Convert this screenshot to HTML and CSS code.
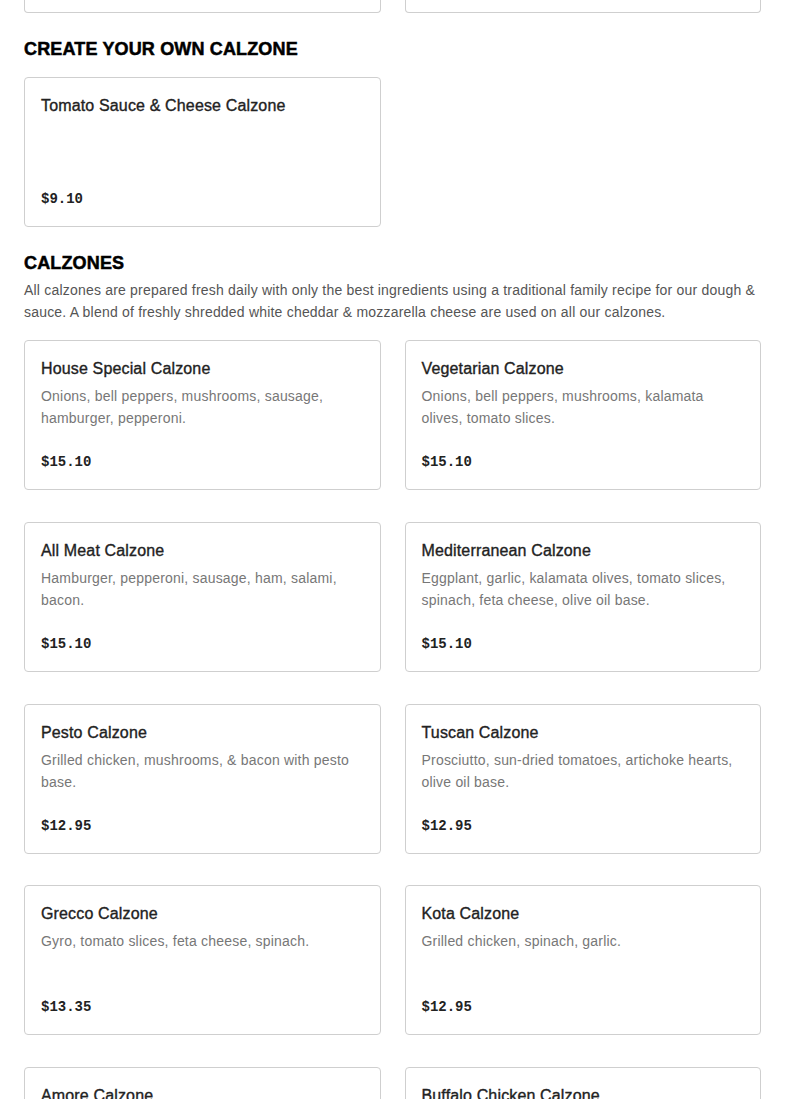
FILE: index.html
```html
<!DOCTYPE html>
<html lang="en">
<head>
<meta charset="utf-8">
<title>Calzones</title>
<link rel="stylesheet" href="styles.css">
</head>
<body>
<main class="menu">
  <div class="grid">
    <div class="stub"></div>
    <div class="stub"></div>
  </div>

  <section class="section">
    <h2 class="section-title">CREATE YOUR OWN CALZONE</h2>
    <div class="grid">
      <article class="card">
        <h3 class="card-title">Tomato Sauce &amp; Cheese Calzone</h3>
        <p class="card-price">$9.10</p>
      </article>
    </div>
  </section>

  <section class="section">
    <h2 class="section-title">CALZONES</h2>
    <p class="section-desc">All calzones are prepared fresh daily with only the best ingredients using a traditional family recipe for our dough &amp; sauce. A blend of freshly shredded white cheddar &amp; mozzarella cheese are used on all our calzones.</p>
    <div class="grid">
      <article class="card">
        <h3 class="card-title">House Special Calzone</h3>
        <p class="card-desc">Onions, bell peppers, mushrooms, sausage, hamburger, pepperoni.</p>
        <p class="card-price">$15.10</p>
      </article>
      <article class="card">
        <h3 class="card-title">Vegetarian Calzone</h3>
        <p class="card-desc">Onions, bell peppers, mushrooms, kalamata olives, tomato slices.</p>
        <p class="card-price">$15.10</p>
      </article>
      <article class="card">
        <h3 class="card-title">All Meat Calzone</h3>
        <p class="card-desc">Hamburger, pepperoni, sausage, ham, salami, bacon.</p>
        <p class="card-price">$15.10</p>
      </article>
      <article class="card">
        <h3 class="card-title">Mediterranean Calzone</h3>
        <p class="card-desc">Eggplant, garlic, kalamata olives, tomato slices, spinach, feta cheese, olive oil base.</p>
        <p class="card-price">$15.10</p>
      </article>
      <article class="card">
        <h3 class="card-title">Pesto Calzone</h3>
        <p class="card-desc">Grilled chicken, mushrooms, &amp; bacon with pesto base.</p>
        <p class="card-price">$12.95</p>
      </article>
      <article class="card">
        <h3 class="card-title">Tuscan Calzone</h3>
        <p class="card-desc">Prosciutto, sun-dried tomatoes, artichoke hearts, olive oil base.</p>
        <p class="card-price">$12.95</p>
      </article>
      <article class="card">
        <h3 class="card-title">Grecco Calzone</h3>
        <p class="card-desc">Gyro, tomato slices, feta cheese, spinach.</p>
        <p class="card-price">$13.35</p>
      </article>
      <article class="card">
        <h3 class="card-title">Kota Calzone</h3>
        <p class="card-desc">Grilled chicken, spinach, garlic.</p>
        <p class="card-price">$12.95</p>
      </article>
      <article class="card">
        <h3 class="card-title">Amore Calzone</h3>
        <p class="card-desc">Chicken, spinach, artichoke hearts, sun-dried tomatoes.</p>
        <p class="card-price">$13.35</p>
      </article>
      <article class="card">
        <h3 class="card-title">Buffalo Chicken Calzone</h3>
        <p class="card-desc">Buffalo chicken, onions, bacon.</p>
        <p class="card-price">$13.35</p>
      </article>
    </div>
  </section>
</main>
</body>
</html>
```

FILE: styles.css
```css
* { box-sizing: border-box; }

html, body {
  margin: 0;
  padding: 0;
  background: #ffffff;
}

body {
  font-family: "Liberation Sans", Arial, sans-serif;
  color: #2b2b2b;
}

.menu {
  padding: 0 24px 40px;
}

.grid {
  display: grid;
  grid-template-columns: 1fr 1fr;
  column-gap: 24px;
  row-gap: 31.75px;
}

.stub {
  height: 13px;
  border: 1px solid #cfcfcf;
  border-top: none;
  border-radius: 0 0 4px 4px;
}

.section {
  padding-top: 23px;
}

.section-title {
  margin: 0 0 15px;
  font-family: "Liberation Sans", Arial, sans-serif;
  font-weight: 900;
  font-size: 18px;
  line-height: 26px;
  color: #000;
  letter-spacing: 0.15px;
  -webkit-text-stroke: 0.5px #000;
}

.section-desc {
  margin: -12px 0 17px;
  font-size: 14px;
  line-height: 22px;
  letter-spacing: 0.2px;
  color: #555555;
}

.card {
  display: flex;
  flex-direction: column;
  height: 150px;
  padding: 16px 16px 15px;
  border: 1px solid #cfcfcf;
  border-radius: 4px;
}

.card-title {
  margin: 0;
  font-size: 16px;
  line-height: 24px;
  font-weight: 400;
  letter-spacing: 0.15px;
  color: #222;
  -webkit-text-stroke: 0.35px #222;
}

.card-desc {
  margin: 4px 0 0;
  font-size: 14px;
  line-height: 22px;
  letter-spacing: 0.2px;
  color: #777777;
}

.card-price {
  margin: auto 0 0;
  font-family: "Liberation Mono", "Courier New", monospace;
  font-weight: 700;
  font-size: 14px;
  line-height: 24px;
  color: #222;
}
```
